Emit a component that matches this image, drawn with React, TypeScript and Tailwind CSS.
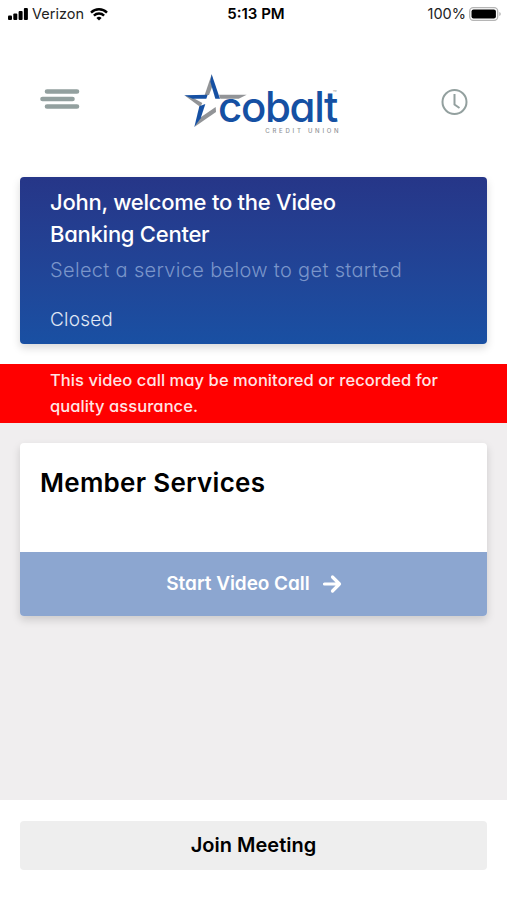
function StatusBar() {
  return (
    <div className="grid h-7 grid-cols-3 items-center pl-2 pr-[6px] text-[14.5px] text-[#222]">
      <div className="flex items-center">
        <svg width="21" height="12" viewBox="0 0 21 12" fill="#000">
          <rect x="0" y="7.5" width="4" height="4.5" rx="1" />
          <rect x="5.3" y="5.5" width="4" height="6.5" rx="1" />
          <rect x="10.6" y="3" width="4" height="9" rx="1" />
          <rect x="15.9" y="0" width="4" height="12" rx="1" />
        </svg>
        <span className="ml-[3px]">Verizon</span>
        <svg className="ml-[6px]" width="18" height="13" viewBox="0 0 18 13" fill="none" stroke="#000" strokeWidth="2.4">
          <path d="M1 4.6a11.3 11.3 0 0 1 16 0" />
          <path d="M3.9 7.6a7.2 7.2 0 0 1 10.2 0" />
          <path d="M9 12.6 6.4 10a3.7 3.7 0 0 1 5.2 0Z" fill="#000" stroke="none" />
        </svg>
      </div>
      <span className="pl-[3px] text-center text-[15px] font-semibold text-black">5:13 PM</span>
      <div className="flex items-center justify-end">
        <span>100%</span>
        <svg className="ml-[3px]" width="32" height="14" viewBox="0 0 32 14">
          <rect x="0.7" y="0.7" width="28" height="12.6" rx="3.5" fill="#fff" stroke="#b5b5b5" strokeWidth="1.3" />
          <rect x="2.5" y="2.5" width="24.4" height="9" rx="2" fill="#000" />
          <path d="M30.3 5v4q1.5-.5 1.5-2t-1.5-2Z" fill="#b5b5b5" />
        </svg>
      </div>
    </div>
  );
}

function Logo() {
  return (
    <svg className="overflow-visible" width="180" height="75" viewBox="0 0 540 225">
      {/* star: grey facets, then the blue ones */}
      <g fill="#929497">
        <path d="M125 28 104 90H117L130 56Z" />
        <path d="M147 89H230L206 101H151Z" />
        <path d="M43 91 91 126 97 114 66 97Z" />
        <path d="M73 186 138 141 137 126 90 158Z" />
      </g>
      <g fill="#1550a3">
        <path d="M125 28 150 101H136L121 50Z" />
        <path d="M43 91 113 89 109 101H68Z" />
        <path d="M88 124 106 117 92 160 73 186Z" />
      </g>
      <text x="144" y="172" fontSize="126" fontWeight="500" textLength="361" fill="#1550a3">cobalt</text>
      <text x="286" y="204" fontSize="18" fontWeight="500" textLength="220" fill="#929497">CREDIT UNION</text>
      <text x="488" y="90" fontSize="19" fill="#929497">™</text>
    </svg>
  );
}

export default function App() {
  return (
    <main className="flex h-[900px] w-[507px] flex-col bg-white font-['Inter',sans-serif] [font-feature-settings:'cv11']">
      <StatusBar />
      <header className="flex h-[149px] items-start pl-10">
        <svg className="mt-[60px]" width="40" height="22" viewBox="0 0 40 22" stroke="#93a09f" strokeWidth="4.6" strokeLinecap="round">
          <path d="M7 3.5h30M2.5 11h30M7 18.5h30" />
        </svg>
        <div className="mt-[37px] ml-[90px]"><Logo /></div>
        <svg className="mt-[60px] ml-[90px]" width="28" height="28" viewBox="0 0 28 28" fill="none" stroke="#93a09f" strokeWidth="2">
          <circle cx="14.5" cy="14" r="12" />
          <path d="M14.5 6v10.5l5 3.5" />
        </svg>
      </header>
      <section className="mx-5 h-[167px] shrink-0 rounded-[4px] bg-linear-to-b from-[#263688] to-[#1950a3] px-[30px] pt-[9px] text-white shadow-[0_4px_8px_rgba(0,0,0,0.15)]">
        <h1 className="text-[22px] font-medium leading-8 tracking-[-0.25px]">
          John, welcome to the Video<br />Banking Center
        </h1>
        <p className="mt-1 text-[20px] font-light leading-8 tracking-[0.33px] text-[#7a95ca]">Select a service below to get started</p>
        <p className="mt-[20px] text-[19px] font-light leading-7 tracking-[0.2px] text-[#e0e8f5]">Closed</p>
      </section>
      <div className="mt-5 h-[59px] shrink-0 bg-[#ff0000] pl-[50px] pt-[3px] text-[16.5px] font-medium leading-[26px] tracking-[0.07px] text-[#ffe5e5]">
        This video call may be monitored or recorded for<br />quality assurance.
      </div>
      <section className="flex-1 bg-[#f0eeef] px-5 pt-5">
        <div className="h-[173px] overflow-hidden rounded-[4px] bg-white shadow-[0_4px_9px_rgba(0,0,0,0.15)]">
          <h2 className="h-[109px] pl-5 pt-[22px] text-[26px] font-semibold leading-9 tracking-[0.28px] text-black">Member Services</h2>
          <button className="flex h-16 w-full items-center justify-center bg-[#8ca6d0] pl-px text-[19px] font-semibold tracking-[-0.05px] text-white">
            <span className="pt-px">Start Video Call</span>
            <svg className="ml-3" width="20" height="20" viewBox="0 0 20 20" fill="none" stroke="#fff" strokeWidth="3.2" strokeLinecap="round" strokeLinejoin="round">
              <path d="M2.5 10h15M10.5 3l7 7-7 7" />
            </svg>
          </button>
        </div>
      </section>
      <footer className="h-[100px] px-5 pt-[21px]">
        <button className="h-[49px] w-full rounded-[4px] bg-[#eee] pb-px text-[20px] font-semibold text-black">Join Meeting</button>
      </footer>
    </main>
  );
}
